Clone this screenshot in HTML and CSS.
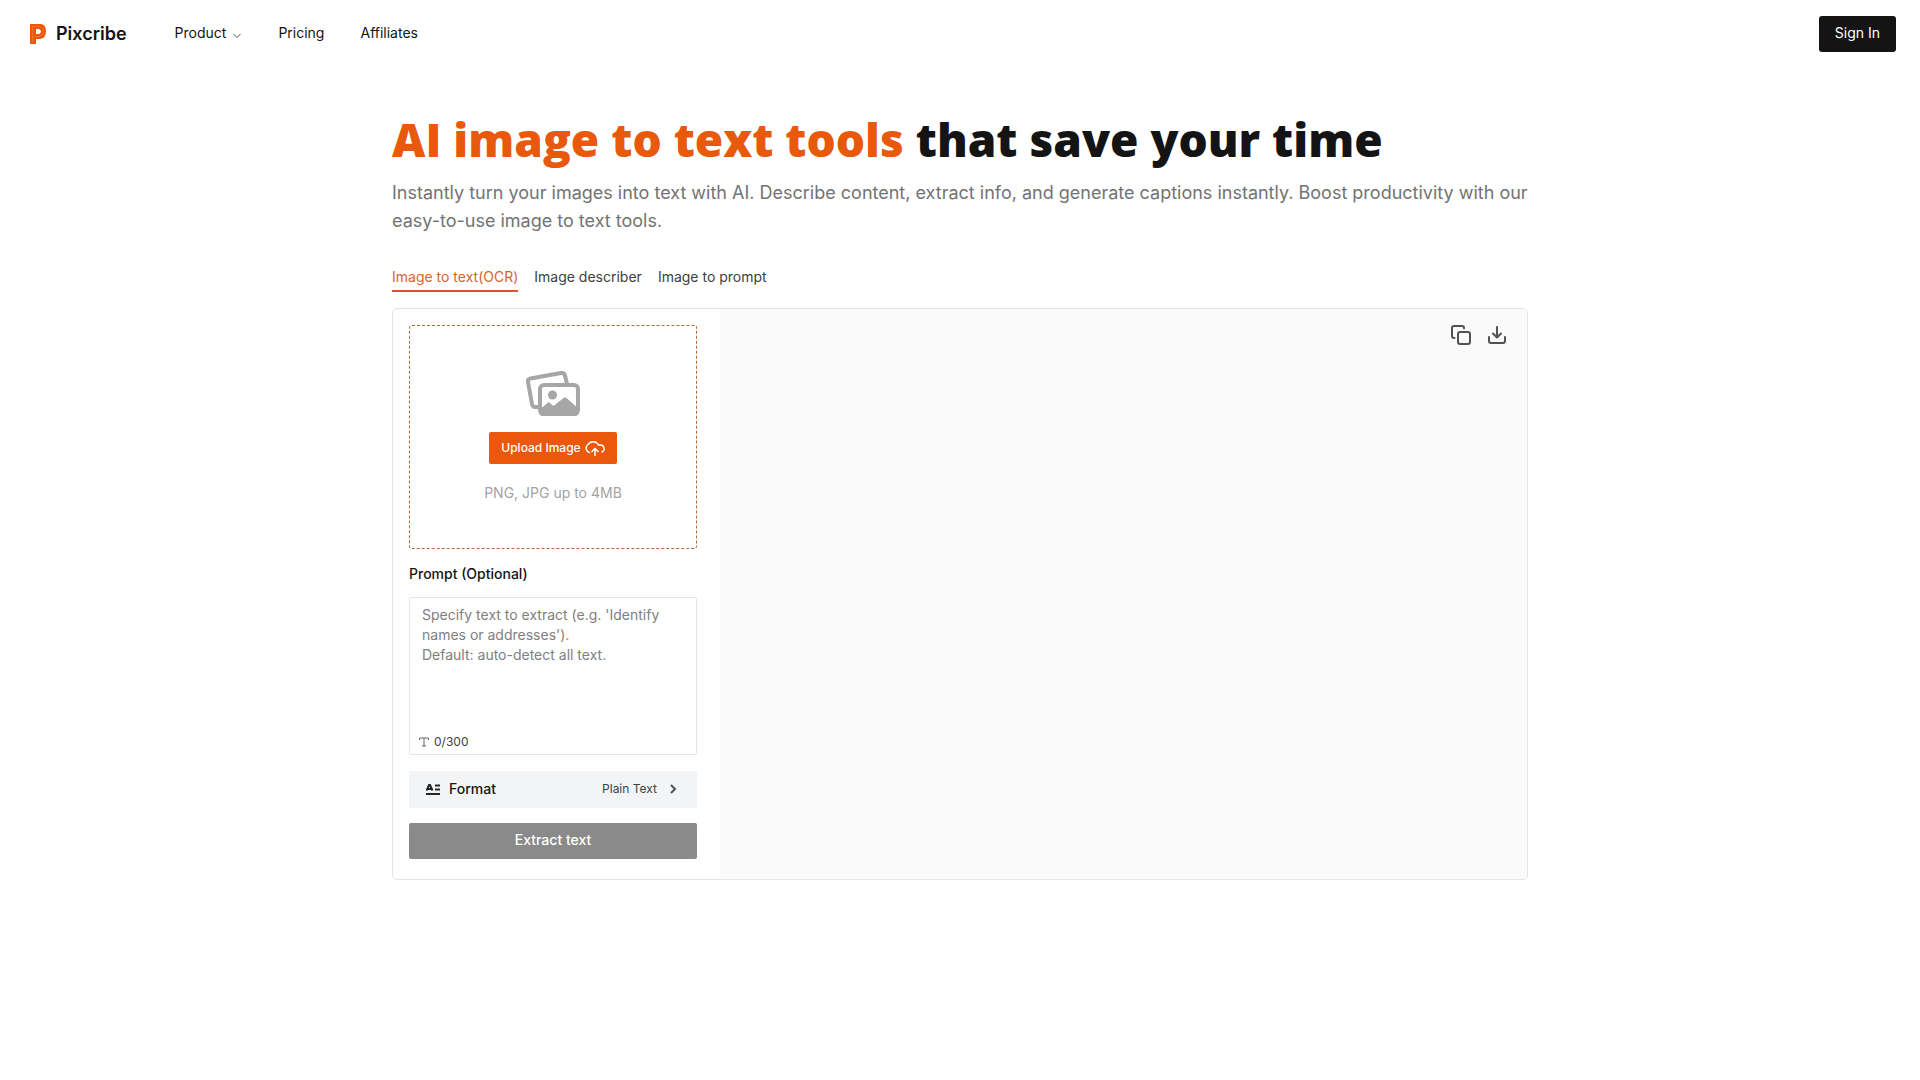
FILE: index.html
```html
<!DOCTYPE html>
<html lang="en">
<head>
<meta charset="utf-8">
<meta name="viewport" content="width=device-width, initial-scale=1">
<title>Pixcribe</title>
<link rel="stylesheet" href="styles.css">
</head>
<body>
<header class="header">
  <a class="brand" href="#">
    <svg class="brand-mark" viewBox="0 0 16 20" aria-hidden="true"><path fill="#e8590c" fill-rule="evenodd" d="M0 0H11Q16 1 16 7Q16 14 10 15H6V20H0ZM6 5V10H9Q11 9 11 7.500Q11 6 9 5Z"/><path d="M2.500 18V2.500H10Q13.500 3 13.500 7.500Q13.500 12 9.500 12.500H4" fill="none" stroke="#f07a38" stroke-width=".8"/></svg>
    Pixcribe
  </a>
  <nav class="nav">
    <button class="nav-link" type="button">Product
      <svg class="chevron" viewBox="0 0 10 10" aria-hidden="true"><path d="M1.500 4 5 7.500 8.500 4"/></svg>
    </button>
    <a class="nav-link" href="#">Pricing</a>
    <a class="nav-link" href="#">Affiliates</a>
  </nav>
  <button class="sign-in" type="button">Sign In</button>
</header>
<main class="main">
  <h1 class="title"><span class="accent">AI image to text tools</span> that save your time</h1>
  <p class="lead">Instantly turn your images into text with AI. Describe content, extract info, and generate captions instantly. Boost productivity with our easy-to-use image to text tools.</p>
  <nav class="tabs">
    <a class="tab tab-active" href="#">Image to text(OCR)</a>
    <a class="tab" href="#">Image describer</a>
    <a class="tab" href="#">Image to prompt</a>
  </nav>
  <section class="card">
    <form class="controls">
      <div class="dropzone">
        <svg class="photos" viewBox="0 0 54 46" aria-hidden="true">
          <path d="M12 36H9Q6.500 36 6 33L2 11Q1.500 8 4.500 7.500L35 2Q38 1.500 39 4.500L41 13" fill="none" stroke="#a6a6a6" stroke-width="4" stroke-linecap="round"/>
          <rect x="14" y="14" width="38" height="29" rx="4" fill="#fff" stroke="#a6a6a6" stroke-width="4"/>
          <circle cx="26.500" cy="24" r="4.500" fill="#a6a6a6"/>
          <path d="M13 39 22 31.500Q23 31 24 32L27.500 35 37.500 27Q39 26 40.500 27L53 38V42Q52 45 49 45H17Q13 45 13 41Z" fill="#a6a6a6"/>
        </svg>
        <button class="upload" type="button">Upload Image
          <svg class="cloud" viewBox="0 0 20 20" aria-hidden="true"><path d="M4.500 14.500A4.500 4.500 0 0 1 3 6.500 6 6 0 0 1 13.500 7H15A3.700 3.700 0 0 1 17 14M10 17.500V10.500M7 13.500 10 10.500 13 13.500"/></svg>
        </button>
        <p class="hint">PNG, JPG up to 4MB</p>
      </div>
      <label class="label" for="prompt">Prompt (Optional)</label>
      <div class="prompt-box">
        <textarea class="prompt" id="prompt" maxlength="300" placeholder="Specify text to extract (e.g. 'Identify names or addresses').&#10;Default: auto-detect all text."></textarea>
        <div class="counter"><svg class="type-icon" viewBox="0 0 10 10" aria-hidden="true"><path d="M.5 3V1H9.500V3M5 1V9M3 9H7"/></svg>0/300</div>
      </div>
      <button class="format" type="button">
        <svg class="format-icon" viewBox="0 0 14 12" aria-hidden="true"><path d="M.5 7.500 3 2H4L6.500 7.500M1.500 6H5.500M9 2.500H14M9 6.500H14M0 11H14"/></svg>
        <span class="format-name">Format</span>
        <span class="format-value">Plain Text</span>
        <svg class="format-arrow" viewBox="0 0 10 10" aria-hidden="true"><path d="M3 1 7 5 3 9"/></svg>
      </button>
      <button class="extract" type="button" disabled>Extract text</button>
    </form>
    <div class="output">
      <button class="tool" type="button" aria-label="Copy"><svg viewBox="0 0 20 20" aria-hidden="true"><rect x="7" y="7" width="12" height="12" rx="2"/><path d="M3.500 13H3Q1 13 1 11V3Q1 1 3 1H11Q13 1 13 3V3.500"/></svg></button>
      <button class="tool" type="button" aria-label="Download"><svg viewBox="0 0 20 20" aria-hidden="true"><path d="M10 2V12M6 8.500 10 12.500 14 8.500M2 12V16Q2 18 4 18H16Q18 18 18 16V12"/></svg></button>
    </div>
  </section>
</main>
</body>
</html>
```
FILE: styles.css
```css
* { box-sizing: border-box; }
body { margin: 0; background: #fff; color: #141414; font: 14px/20px Inter, sans-serif; }
button { margin: 0; padding: 0; border: 0; background: none; color: inherit; font: inherit; cursor: pointer; }
a { color: inherit; text-decoration: none; }
svg { display: block; flex: none; }

.header { display: flex; align-items: center; padding: 16px 24px 16px 30px; }
.brand { display: flex; align-items: center; gap: 10px; font-size: 18px; font-weight: 600; }
.brand-mark { width: 16px; height: 20px; }
.nav { display: flex; gap: 36px; margin-left: 48px; padding-bottom: 2px; }
.nav-link { display: flex; align-items: center; gap: 6px; }
.chevron { width: 10px; height: 10px; margin-top: 4px; fill: none; stroke: #555; }
.sign-in { height: 36px; margin-left: auto; padding: 0 16px 2px; border-radius: 3px; background: #141414; color: #fff; }

.main { max-width: 1168px; margin: 0 auto; padding: 43px 16px; }
.title { margin: 0; font: 800 46px/56px "Open Sans", sans-serif; }
.accent { color: #e8590c; }
.lead { margin: 12px 0 0; color: #737373; font-size: 18px; line-height: 28px; }
.tabs { display: flex; gap: 16px; margin: 27px 0 16px; color: #404040; }
.tab { padding: 5px 0 3px; border-bottom: 2px solid transparent; }
.tab-active { border-color: #d9532c; color: #d9632c; }

.card { display: flex; border: 1px solid #e5e5e5; border-radius: 5px; overflow: hidden; }
.controls { display: flex; flex: none; flex-direction: column; width: 327px; padding: 16px 23px 20px 16px; }
.dropzone { display: flex; flex-direction: column; align-items: center; height: 224px; padding-top: 45px; border: 1px dashed #b06a3c; border-radius: 3px; }
.photos { width: 54px; height: 46px; }
.upload { display: flex; align-items: center; gap: 4px; height: 32px; margin-top: 15px; padding: 0 12px; border-radius: 2px; background: #ea580c; color: #fff; font-size: 12px; font-weight: 500; }
.cloud { width: 20px; height: 20px; fill: none; stroke: #fff; stroke-width: 1.5; stroke-linecap: round; stroke-linejoin: round; }
.hint { margin: 19px 0 0; color: #a3a3a3; }
.label { margin: 15px 0 13px; font-weight: 500; }
.prompt-box { display: flex; flex-direction: column; height: 158px; border: 1px solid #e5e5e5; border-radius: 2px; }
.prompt { flex: 1; width: 100%; padding: 7px 12px; border: 0; outline: 0; background: none; color: inherit; font: inherit; resize: none; }
.prompt::placeholder { color: #808080; opacity: 1; }
.counter { display: flex; align-items: center; gap: 5px; padding: 0 9px 2px; color: #404040; font-size: 12px; }
.type-icon { width: 10px; height: 10px; fill: none; stroke: #666; }
.format { display: flex; align-items: center; height: 37px; margin-top: 16px; padding: 0 19px 2px 17px; background: #f3f4f6; }
.format-icon { width: 14px; height: 12px; fill: none; stroke: #262626; stroke-width: 2; }
.format-name { margin-left: 9px; font-weight: 500; }
.format-value { margin-left: auto; color: #404040; font-size: 12px; }
.format-arrow { width: 10px; height: 10px; margin-left: 11px; fill: none; stroke: #525252; stroke-width: 2; }
.extract { height: 36px; margin-top: 15px; padding-bottom: 2px; border-radius: 2px; background: #8a8a8a; color: #fff; font-weight: 500; cursor: default; }
.output { display: flex; flex: 1; align-items: flex-start; justify-content: flex-end; gap: 16px; padding: 16px 20px; background: #fafafb; }
.tool svg { width: 20px; height: 20px; fill: none; stroke: #525252; stroke-width: 2; stroke-linecap: round; stroke-linejoin: round; }
```
